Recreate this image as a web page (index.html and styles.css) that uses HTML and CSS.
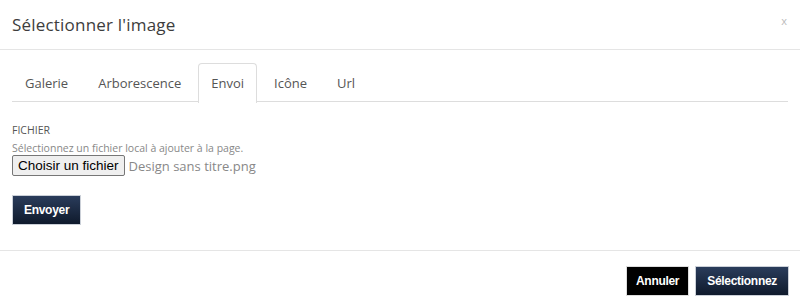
FILE: index.html
```html
<!DOCTYPE html>
<html lang="fr">

<head>
    <meta charset="UTF-8">
    <meta name="viewport" content="width=device-width, initial-scale=1.0">
    <title>Sélectionner l'image</title>
    <link rel="stylesheet" href="styles.css">
</head>

<body>
    <div class="modal">
        <div class="modal-header">
            <h4 class="modal-title">Sélectionner l'image</h4>
            <span class="close">x</span>
        </div>
        <div class="modal-body">
            <ul class="tabs">
                <li>Galerie</li>
                <li>Arborescence</li>
                <li class="active">Envoi</li>
                <li>Icône</li>
                <li>Url</li>
            </ul>
            <div class="pane">
                <label class="field-label">FICHIER</label>
                <p class="help">Sélectionnez un fichier local à ajouter à la page.</p>
                <div class="file-row">
                    <span class="file-btn">Choisir un fichier</span>
                    <span class="file-name">Design sans titre.png</span>
                </div>
                <button class="btn btn-primary">Envoyer</button>
            </div>
        </div>
        <div class="modal-footer">
            <button class="btn btn-black">Annuler</button>
            <button class="btn btn-primary">Sélectionnez</button>
        </div>
    </div>
</body>

</html>
```

FILE: styles.css
```css
body {
    margin: 0px;
    padding: 0px;
    background: #fff;
    font-family: "Open Sans", "Noto Sans", sans-serif;
    color: #333;
}

.modal-header {
    display: flex;
    justify-content: space-between;
    align-items: flex-start;
    padding: 13px 12px 0 12px;
    height: 36px;
    border-bottom: 1px solid #e5e5e5;
}

.modal-title {
    margin: 0;
    font-size: 17px;
    font-weight: 400;
    color: #3d3d3d;
    letter-spacing: 0.2px;
}

.close {
    font-size: 11px;
    color: #bbb;
    margin-top: 0px;
    margin-right: 1px;
}

.modal-body {
    padding: 13px 12px 0 12px;
}

.tabs {
    display: flex;
    list-style: none;
    margin: 0;
    padding: 0;
    border-bottom: 1px solid #ddd;
    height: 38px;
}

.tabs li {
    padding: 10px 12px 0 12px;
    font-size: 13px;
    color: #555;
    margin-right: 4px;
    height: 28px;
    border: 1px solid transparent;
    border-bottom: none;
    border-radius: 4px 4px 0 0;
}

.tabs li.active {
    border-color: #ddd;
    background: #fff;
    height: 29px;
}

.pane {
    padding-top: 21px;
}

.field-label {
    display: block;
    font-size: 10.5px;
    color: #555;
    font-weight: 500;
}

.help {
    margin: 4px 0 0 0;
    font-size: 10.5px;
    color: #888;
}

.file-row {
    display: flex;
    align-items: center;
    margin-top: 0px;
}

.file-btn {
    font-family: "Liberation Sans", Arial, sans-serif;
    font-size: 13.5px;
    color: #000;
    background: #efefef;
    border: 1px solid #767676;
    border-radius: 2px;
    padding: 1px 5px;
    height: 17px;
    line-height: 17px;
}

.file-name {
    margin-left: 4px;
    font-size: 13px;
    color: #888;
}

.btn {
    font-family: "Liberation Sans", Arial, sans-serif;
    font-weight: bold;
    font-size: 12px;
    letter-spacing: -0.3px;
    color: #fff;
    border: 1px solid #cbd0d8;
    height: 30px;
    padding: 0 11px;
}

.pane .btn {
    margin-top: 19px;
}

.btn-primary {
    background: linear-gradient(#2a3c5b, #0f1a2c);
}

.btn-black {
    background: #000;
    border-color: #ddd;
    padding: 0 9px;
}

.modal-footer {
    display: flex;
    justify-content: flex-end;
    gap: 6px;
    margin-top: 25px;
    border-top: 1px solid #e5e5e5;
    padding: 15px 11px 0 0;
}
```
